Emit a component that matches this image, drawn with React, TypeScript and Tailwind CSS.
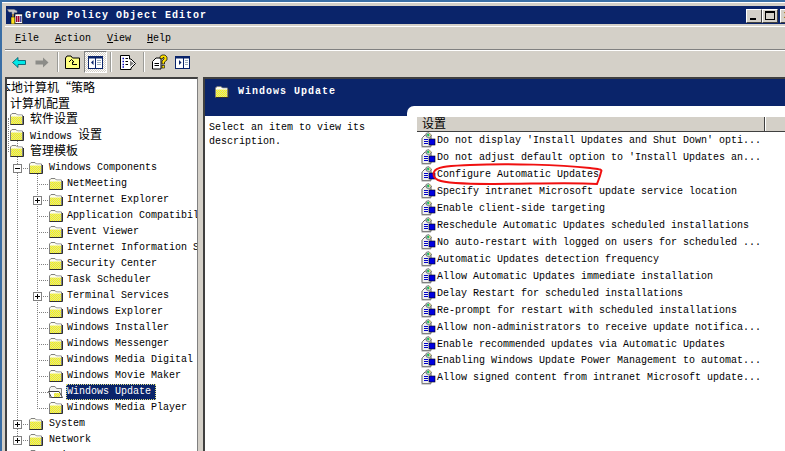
import React from 'react';

const mono = "font-['Liberation_Mono','Noto_Sans_CJK_SC',monospace] text-[10px] leading-none text-black";

const Cjk = ({ children }: { children: React.ReactNode }) => (
    <span className="font-['Noto_Sans_CJK_SC',sans-serif] text-[12px] leading-none">{children}</span>
);

// checkerboard of the old 16 colour folder icons, drawn as dashed rows
const Dither = ({ x, y, w, rows }: { x: number; y: number; w: number; rows: number }) => (
    <>
        <rect x={x} y={y} width={w} height={rows} fill="#ffff00" />
        {Array.from({ length: rows }).map((_, i) => (
            <path
                key={i}
                d={`M${x + (i % 2)} ${y + i + 0.5} H${x + w}`}
                stroke="#d8d8a8"
                strokeDasharray="1 1"
                shapeRendering="crispEdges"
            />
        ))}
    </>
);

const Folder = ({ open = false }: { open?: boolean }) => (
    <svg width="16" height="14" viewBox="0 0 16 14" className="shrink-0">
        {open ? (
            <>
                <path d="M1.5 3.5 L3 1.5 H7 L8.5 3.5 H13.5 V12.5 H1.5 Z" fill="#f4f4f0" stroke="#808080" />
                <path d="M0.5 6.5 H11 L14.5 12.5 H3.5 Z" fill="#fff" stroke="#404040" />
                <Dither x={6} y={8} w={6} rows={4} />
            </>
        ) : (
            <>
                <path d="M1.5 3 L3 1.5 H7 L8.5 3 H13.5 V12.5 H1.5 Z" fill="#fbfbe8" stroke="#808080" />
                <Dither x={2} y={4} w={11} rows={8} />
                <path d="M1.5 12.5 H14.5 V4" fill="none" stroke="#303030" />
                <path d="M2 4 H13" stroke="#fff" />
            </>
        )}
    </svg>
);

type Node = { label: React.ReactNode; depth: number; box?: 'plus' | 'minus'; selected?: boolean };

const tree: Node[] = [
    { label: <Cjk>软件设置</Cjk>, depth: 1 },
    { label: <>Windows <Cjk>设置</Cjk></>, depth: 1 },
    { label: <Cjk>管理模板</Cjk>, depth: 1 },
    { label: 'Windows Components', depth: 2, box: 'minus' },
    { label: 'NetMeeting', depth: 3 },
    { label: 'Internet Explorer', depth: 3, box: 'plus' },
    { label: 'Application Compatibility', depth: 3 },
    { label: 'Event Viewer', depth: 3 },
    { label: 'Internet Information Services', depth: 3 },
    { label: 'Security Center', depth: 3 },
    { label: 'Task Scheduler', depth: 3 },
    { label: 'Terminal Services', depth: 3, box: 'plus' },
    { label: 'Windows Explorer', depth: 3 },
    { label: 'Windows Installer', depth: 3 },
    { label: 'Windows Messenger', depth: 3 },
    { label: 'Windows Media Digital Rights', depth: 3 },
    { label: 'Windows Movie Maker', depth: 3 },
    { label: 'Windows Update', depth: 3, selected: true },
    { label: 'Windows Media Player', depth: 3 },
    { label: 'System', depth: 2, box: 'plus' },
    { label: 'Network', depth: 2, box: 'plus' },
    { label: 'Printers', depth: 2, box: 'plus' },
];

const policies = [
    "Do not display 'Install Updates and Shut Down' opti...",
    "Do not adjust default option to 'Install Updates an...",
    'Configure Automatic Updates',
    'Specify intranet Microsoft update service location',
    'Enable client-side targeting',
    'Reschedule Automatic Updates scheduled installations',
    'No auto-restart with logged on users for scheduled ...',
    'Automatic Updates detection frequency',
    'Allow Automatic Updates immediate installation',
    'Delay Restart for scheduled installations',
    'Re-prompt for restart with scheduled installations',
    'Allow non-administrators to receive update notifica...',
    'Enable recommended updates via Automatic Updates',
    'Enabling Windows Update Power Management to automat...',
    'Allow signed content from intranet Microsoft update...',
];

const PolicyIcon = () => (
    <svg width="16" height="16" viewBox="0 0 16 16" className="shrink-0 -mt-[2px]">
        <path d="M2.5 5.5 L5 3 H11 V14.5 H2 V6 Z" fill="#f0f0f0" stroke="#606060" />
        <path d="M1.5 15 H11" stroke="#a0a0a0" />
        <path d="M6 1.5 L8.5 0.5 L11.5 3 L9.5 6 L6.5 5 Z" fill="#d8d8d8" stroke="#606060" strokeWidth="0.7" />
        <path d="M7 2 L9 1.5 L9.5 4 L7.5 4.5 Z" fill="#20b868" />
        <path d="M9 1.5 L11 3 L9.5 4 Z" fill="#e8e040" />
        <rect x="4" y="7" width="4" height="1" fill="#0000c8" />
        <rect x="4" y="9" width="4" height="1" fill="#0000c8" />
        <rect x="4" y="11" width="4" height="1" fill="#0000c8" />
        <rect x="9" y="7" width="6" height="6" fill="#0000e0" stroke="#000" strokeWidth="0.6" />
    </svg>
);

const Separator = () => (
    <div className="w-[2px] h-[20px] bg-[#9c9c98] border-r border-white" />
);

const PanelIcon = () => (
    <svg width="15" height="13" viewBox="0 0 15 13">
        <rect x="0.5" y="0.5" width="14" height="12" fill="#fff" stroke="#0a246a" />
        <rect x="0.5" y="0.5" width="14" height="2" fill="#0a246a" />
        <rect x="7" y="1" width="1" height="11" fill="#0a246a" />
        <path d="M5.5 4 V9 L3 6.5 Z" fill="#0a246a" />
        <path d="M9 4.5 H13 M9 6.5 H13 M9 8.5 H13" stroke="#9ab" />
    </svg>
);

const PanelIconRight = () => (
    <svg width="15" height="13" viewBox="0 0 15 13">
        <rect x="0.5" y="0.5" width="14" height="12" fill="#fff" stroke="#0a246a" />
        <rect x="0.5" y="0.5" width="14" height="2" fill="#0a246a" />
        <rect x="8" y="1" width="1" height="11" fill="#0a246a" />
        <path d="M4 4 V9 L6.5 6.5 Z" fill="#0a246a" />
        <path d="M10 4.5 H13 M10 6.5 H13 M10 8.5 H13" stroke="#9ab" />
    </svg>
);

const WinButton = ({ children, className = '' }: { children: React.ReactNode; className?: string }) => (
    <div className={`w-[16px] h-[14px] shrink-0 bg-[#d4d0c8] border border-t-white border-l-white border-r-[#404040] border-b-[#404040] relative ${className}`}>
        {children}
    </div>
);

export default function App() {
    return (
        <div className={`relative w-[785px] h-[451px] overflow-hidden bg-[#3a6ea5] pl-[2px] pt-[2px] ${mono}`}>
            <div className="h-full flex flex-col bg-[#d4d0c8] pl-[3px] pt-[3px] border-t border-white">
                {/* title bar */}
                <div className="h-[18px] shrink-0 ml-[1px] bg-[#0a246a] flex items-center pl-[1px] pt-[2px]">
                    <svg width="16" height="16" viewBox="0 0 16 16" className="shrink-0">
                        <path d="M0.5 1.5 H7 L10 3 V4.5 H7 V6 H5 V4 H2 Z" fill="#c8c8c8" stroke="#909090" strokeWidth="0.5" />
                        <rect x="5" y="6" width="2" height="3" fill="#a08040" />
                        <rect x="4" y="9" width="4" height="7" fill="#ffe020" stroke="#000" strokeWidth="0.5" />
                        <rect x="8" y="6" width="7.5" height="9.5" fill="#fff" stroke="#000" strokeWidth="0.6" />
                        <rect x="9" y="8" width="1.5" height="6" fill="#a00030" />
                        <rect x="11" y="8" width="1.5" height="6" fill="#a00030" />
                        <rect x="13" y="8" width="1.5" height="6" fill="#5050a0" />
                    </svg>
                    <span className="ml-[2px] text-white font-bold tracking-[1px] font-['Liberation_Mono',monospace]">Group Policy Object Editor</span>
                    <div className="ml-auto -mr-[11px] flex">
                        <WinButton><div className="absolute left-[3px] bottom-[2px] w-[6px] h-[2px] bg-black" /></WinButton>
                        <WinButton><div className="absolute left-[2px] top-[1px] w-[10px] h-[9px] border border-black border-t-2" /></WinButton>
                        <WinButton className="ml-[2px]">
                            <span className="absolute left-[3px] top-[1px] font-bold text-black">x</span>
                        </WinButton>
                    </div>
                </div>

                {/* menu */}
                <div className="h-[24px] shrink-0 mt-[2px] border-t border-white border-b border-b-[#808080] flex items-center pl-[10px] pt-[2px] gap-[16px]">
                    <span><u>F</u>ile</span>
                    <span><u>A</u>ction</span>
                    <span><u>V</u>iew</span>
                    <span><u>H</u>elp</span>
                </div>

                {/* toolbar */}
                <div className="h-[23px] shrink-0 border-t border-white flex items-center">
                    <svg width="14" height="11" viewBox="0 0 14 11" className="ml-[7px]">
                        <path d="M0.5 5.5 L6 0.5 V3.5 H13.5 V7.5 H6 V10.5 Z" fill="#00e8e8" stroke="#005060" strokeWidth="0.8" />
                    </svg>
                    <svg width="14" height="11" viewBox="0 0 14 11" className="ml-[9px]">
                        <path d="M13.5 5.5 L8 0.5 V3.5 H0.5 V7.5 H8 V10.5 Z" fill="#8c8c88" />
                    </svg>
                    <div className="ml-[8px]"><Separator /></div>
                    <svg width="16" height="14" viewBox="0 0 16 14" className="ml-[6px]">
                        <path d="M0.5 3 L2 1 H6 L7.5 3 H14.5 V13.5 H0.5 Z" fill="#ffff80" stroke="#000" />
                        <path d="M4 7 L6.5 4.5 L9 7 H7.5 V9.5 H12" fill="none" stroke="#000" />
                    </svg>
                    <div className="ml-[3px] w-[23px] h-[22px] flex items-center justify-center border border-t-[#808080] border-l-[#808080] border-r-white border-b-white bg-[repeating-conic-gradient(#ffffff_0_25%,#d4d0c8_0_50%)] bg-[length:2px_2px]">
                        <PanelIcon />
                    </div>
                    <div className="ml-[3px]"><Separator /></div>
                    <svg width="16" height="15" viewBox="0 0 16 15" className="ml-[8px]">
                        <path d="M0.5 0.5 H9.5 V4 H11 L15.5 8.5 L11 13 V14.5 H0.5 Z" fill="#fff" stroke="#000" />
                        <path d="M10 5.5 L14 8.5 L10 11.5 Z" fill="#808080" />
                        <path d="M2.5 3.5 H4 M2.5 6.5 H4 M2.5 9.5 H4 M2.5 12 H4" stroke="#0000c0" strokeWidth="1.5" />
                        <path d="M5.5 3.5 H8 M5.5 6.5 H8 M5.5 9.5 H8" stroke="#000" />
                    </svg>
                    <div className="ml-[7px]"><Separator /></div>
                    <svg width="16" height="16" viewBox="0 0 16 16" className="ml-[7px]">
                        <path d="M4 4 H9 V15 H0.5 V7.5 Z" fill="#fff" stroke="#000" />
                        <path d="M2.5 9.5 H7 M2.5 11.5 H7" stroke="#000" />
                        <path d="M8 4.5 V2.5 L10 1 H13 L15 3 V6 L12.5 8 V10 H10 V7 L12 5 V3.5 H11 L10.5 5 Z" fill="#ffe000" stroke="#000" strokeWidth="0.7" />
                        <rect x="10" y="11.5" width="2.5" height="2.5" fill="#ffe000" stroke="#000" strokeWidth="0.6" />
                    </svg>
                    <div className="ml-[7px]"><PanelIconRight /></div>
                </div>

                {/* panes */}
                <div className="flex-1 min-h-0 flex gap-[5px] mt-[4px]">
                    <div className="relative w-[193px] shrink-0 bg-white border-t-2 border-l-2 border-[#404040] overflow-hidden border-r border-r-[#808080]">
                        {/* tree guides */}
                        <div className="absolute left-[1px] top-[39px] h-[32px] w-0 border-l border-dotted border-[#808080]" />
                        <div className="absolute left-[10px] top-[61px] h-[300px] w-0 border-l border-dotted border-[#808080]" />
                        <div className="absolute left-[30px] top-[93px] h-[235px] w-0 border-l border-dotted border-[#808080]" />
                        <div className="h-[16px] flex items-center -ml-[8px] whitespace-nowrap">
                            <Cjk>本地计算机<span className="inline-block w-[12px]">“</span>策略</Cjk>
                        </div>
                        <div className="h-[16px] flex items-center ml-[3px] whitespace-nowrap"><Cjk>计算机配置</Cjk></div>
                        {tree.map((n, i) => {
                            const iconLeft = n.depth === 1 ? 2 : n.depth === 2 ? 21 : 41;
                            const lineLeft = n.depth === 1 ? 1 : n.depth === 2 ? 10 : 30;
                            return (
                                <div key={i} className={`relative h-[16px] flex items-center whitespace-nowrap ${i === 3 ? 'mt-[1px]' : ''}`} style={{ paddingLeft: iconLeft }}>
                                    <div className="absolute top-[8px] h-0 border-t border-dotted border-[#808080]" style={{ left: lineLeft, width: iconLeft - lineLeft }} />
                                    {n.box && (
                                        <div style={{ left: lineLeft - 4 }} className="absolute top-[4px]">
                                            <div className="relative w-[9px] h-[9px] border border-[#808080] bg-white flex items-center justify-center">
                                                <div className="relative w-[5px] h-[1px] bg-black">
                                                    {n.box === 'plus' && <div className="absolute left-[2px] -top-[2px] w-[1px] h-[5px] bg-black" />}
                                                </div>
                                            </div>
                                        </div>
                                    )}
                                    <div className="relative"><Folder open={n.selected} /></div>
                                    {n.selected ? (
                                        <span className="relative ml-[2px] h-[16px] pr-[4px] flex items-center bg-[#0a246a] text-white border border-dotted border-[#e0e080]">{n.label}</span>
                                    ) : (
                                        <span className={`relative ${n.depth === 3 ? 'ml-[3px]' : 'ml-[5px]'}`}>{n.label}</span>
                                    )}
                                </div>
                            );
                        })}
                    </div>

                    <div className="flex-1 min-w-0 flex flex-col bg-[#0a246a] border-t-2 border-l-2 border-[#404040]">
                        <div className="h-[27px] shrink-0 flex items-center pl-[9px] pb-[2px]">
                            <Folder />
                            <span className="ml-[8px] text-white font-bold tracking-[1px]">Windows Update</span>
                        </div>
                        <div className="flex-1 min-h-0 flex">
                            <div className="w-[202px] shrink-0 mt-[10px] bg-white pl-[4px] pr-[4px] pt-[5px] leading-[14px]">
                                Select an item to view its description.
                            </div>
                            <div className="flex-1 min-w-0 bg-white rounded-tl-[7px] pl-[10px] pt-[11px]">
                                <div className="h-[15px] flex border-b border-[#404040]">
                                    <div className="w-[348px] shrink-0 bg-[#d4d0c8] border-r border-[#404040] pl-[5px] pb-[2px] flex items-center"><Cjk>设置</Cjk></div>
                                    <div className="flex-1 bg-[#d4d0c8] border-l border-white" />
                                </div>
                                <div className="pl-[3px] mt-[1px]">
                                    {policies.map((p) => (
                                        <div key={p} className="h-[16.93px] flex items-center whitespace-nowrap">
                                            <PolicyIcon />
                                            <span className="ml-[1px]">{p}</span>
                                        </div>
                                    ))}
                                </div>
                            </div>
                        </div>
                    </div>
                </div>
            </div>

            {/* red marker scribble */}
            <svg width="785" height="451" viewBox="0 0 785 451" className="absolute inset-0 pointer-events-none">
                <path
                    d="M434 172 C436 166 450 166 470 165 C510 163 560 165 590 168 C598 169 603 169 601 172 C600 177 598 181 597 184 C570 182 530 184 490 184 C465 184 445 183 438 180 C434 178 433 175 434 172 Z"
                    fill="none"
                    stroke="#f01010"
                    strokeWidth="2"
                />
            </svg>
        </div>
    );
}
